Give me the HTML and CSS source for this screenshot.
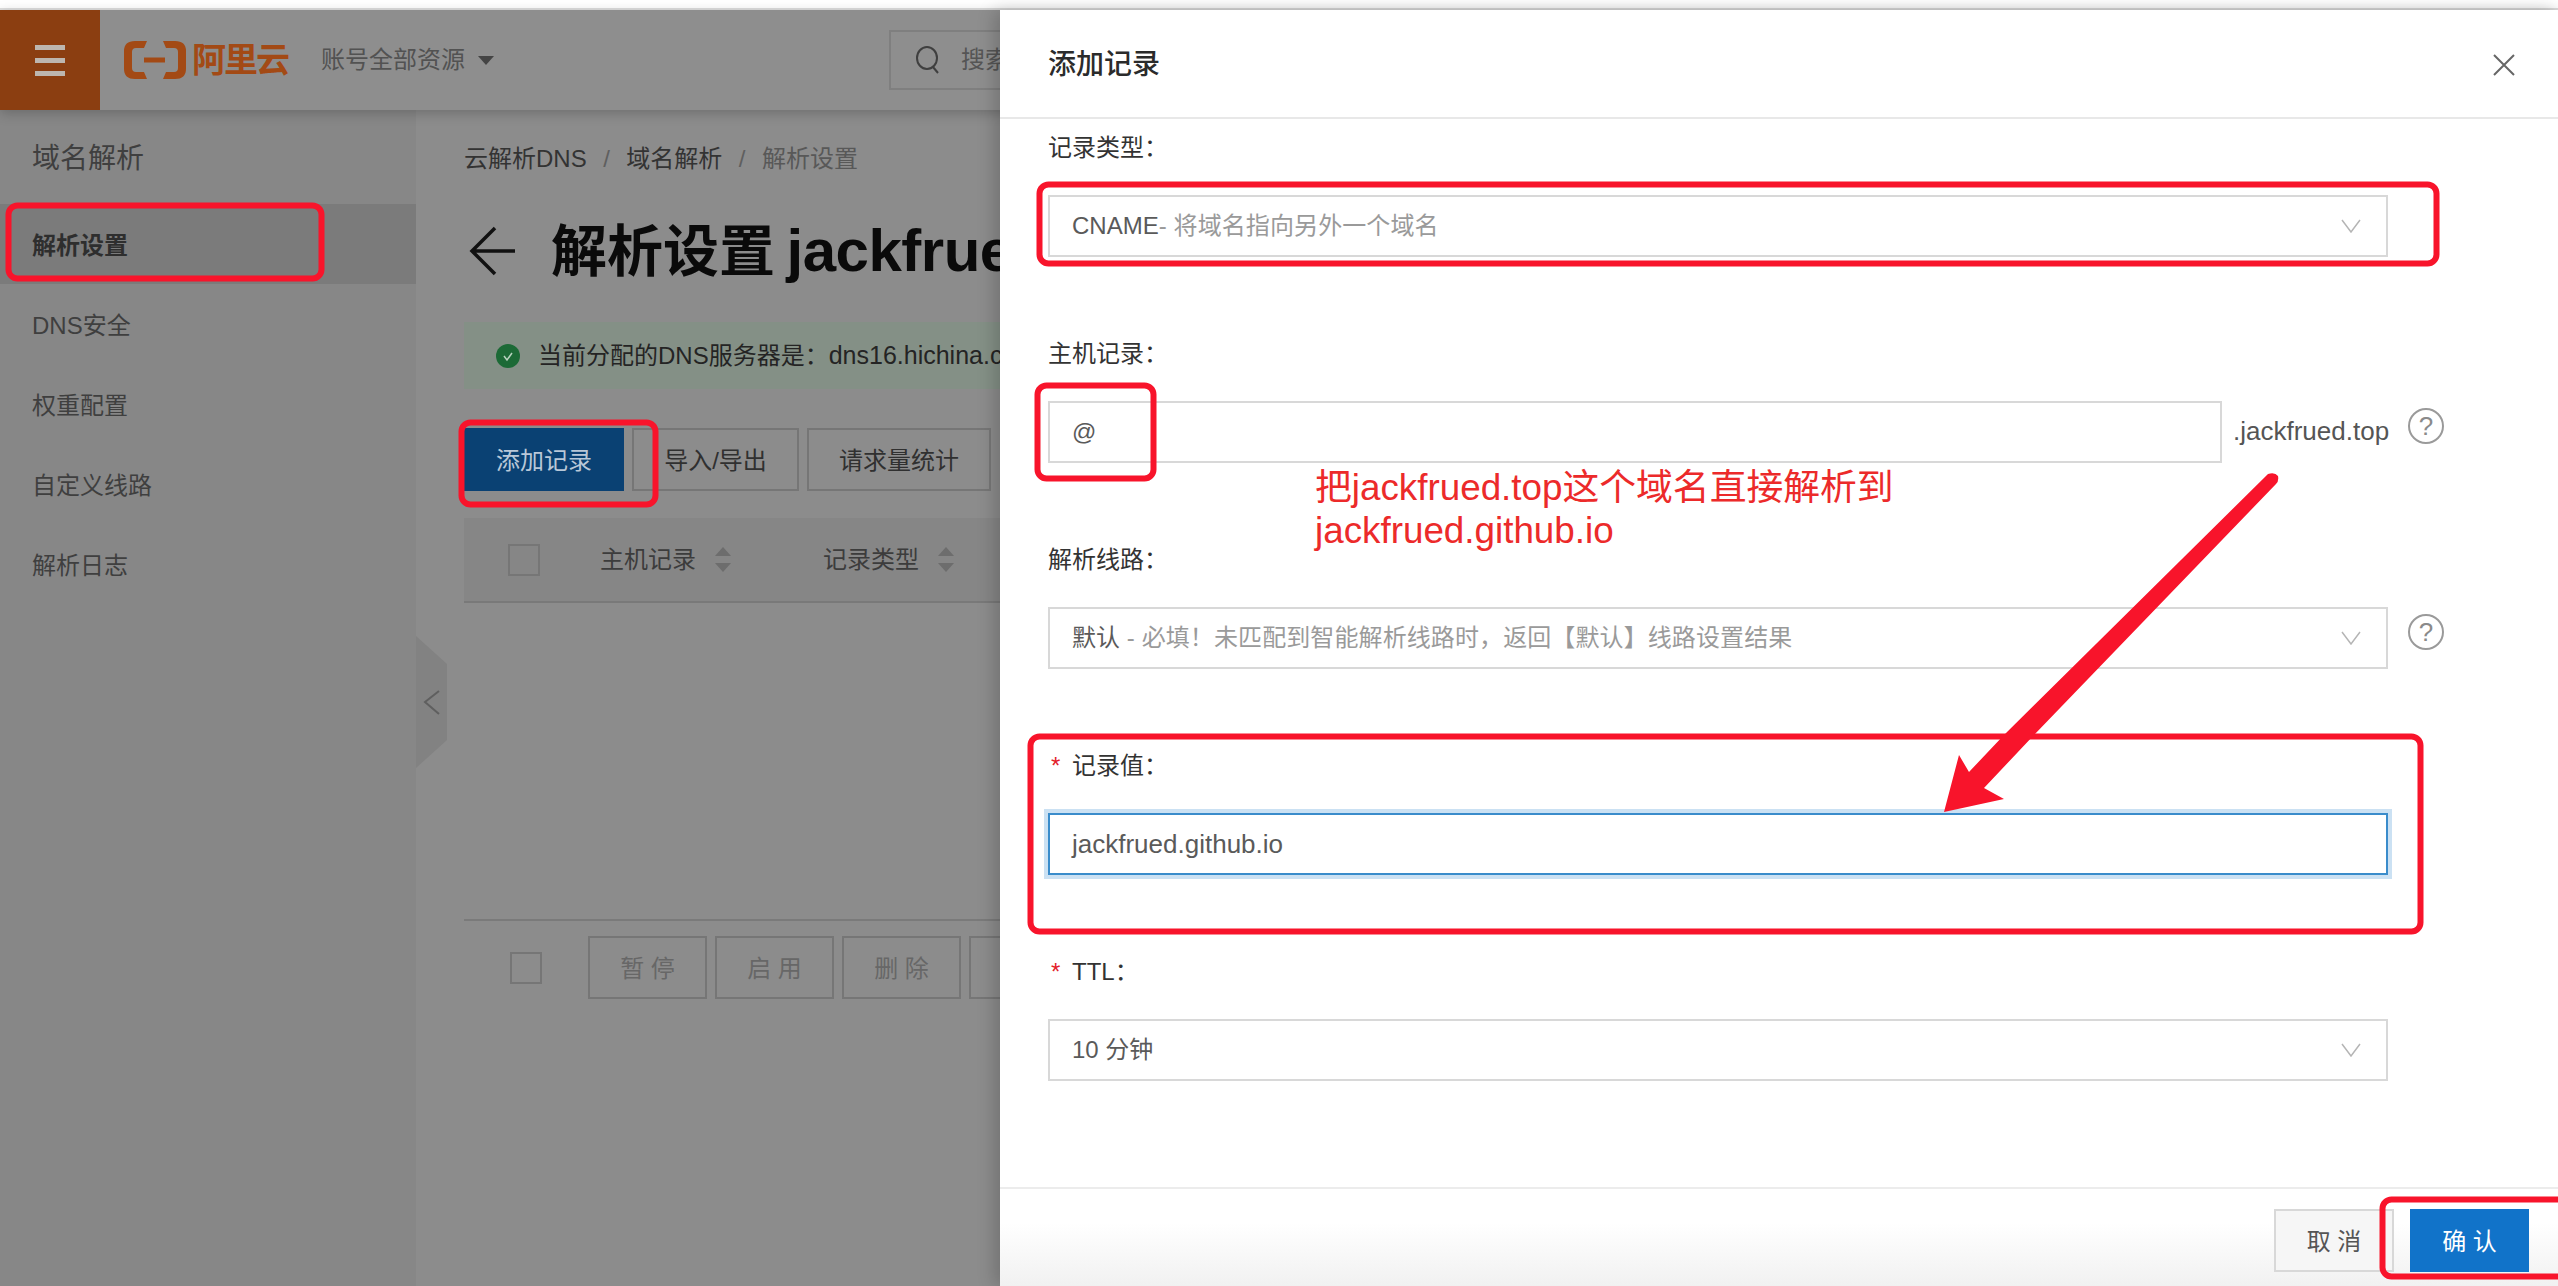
FILE: index.html
```html
<!DOCTYPE html>
<html lang="zh-CN">
<head>
<meta charset="utf-8">
<title>添加记录</title>
<link rel="stylesheet" href="styles.css">
</head>
<body>
<div class="topstrip"></div>
<header class="topbar">
  <div class="burger"><span></span><span></span><span></span></div>
  <svg class="logo-mark" width="62" height="38" viewBox="0 0 62 38"><path d="M23 0H11Q0 0 0 10V28Q0 38 11 38H23L20 31H12Q8 31 8 27V11Q8 7 12 7H20Z"/><path d="M39 0H51Q62 0 62 10V28Q62 38 51 38H39L42 31H50Q54 31 54 27V11Q54 7 50 7H42Z"/><rect x="20" y="16.500" width="21" height="5"/></svg>
  <span class="logo-text">阿里云</span>
  <span class="scope">账号全部资源</span>
  <svg class="caret" width="16" height="9" viewBox="0 0 16 9"><path d="M0 0H16L8 9Z"/></svg>
  <div class="search">
    <svg width="26" height="30" viewBox="0 0 26 30"><ellipse cx="12" cy="13" rx="10" ry="11"/><path d="M18 22L23 28"/></svg>
    <span>搜索</span>
  </div>
</header>
<div class="shell">
  <aside class="side">
    <div class="side-title">域名解析</div>
    <div class="side-item active">解析设置</div>
    <div class="side-item">DNS安全</div>
    <div class="side-item">权重配置</div>
    <div class="side-item">自定义线路</div>
    <div class="side-item">解析日志</div>
    <div class="side-tab">
      <svg width="32" height="132" viewBox="0 0 32 132"><path class="tab-shape" d="M0 0L31 28V104L0 132Z"/><path class="tab-chev" d="M23 55L9 66L23 78"/></svg>
    </div>
  </aside>
  <main class="main">
    <nav class="crumbs"><span>云解析DNS</span><i>/</i><span>域名解析</span><i>/</i><span class="crumb-last">解析设置</span></nav>
    <div class="title-row">
      <svg width="50" height="52" viewBox="0 0 50 52"><path d="M47 26H4M27 3L4 26L27 49"/></svg>
      <h1>解析设置 <span class="title-latin">jackfrued.top</span></h1>
    </div>
    <div class="alert">
      <svg width="24" height="24" viewBox="0 0 24 24"><circle cx="12" cy="12" r="12"/><path d="M8 12L11 16L16 9"/></svg>
      <span>当前分配的DNS服务器是：<span class="alert-latin">dns16.hichina.com, dns15.hichina.com</span></span>
    </div>
    <div class="toolbar">
      <button class="btn primary">添加记录</button>
      <button class="btn">导入/导出</button>
      <button class="btn">请求量统计</button>
    </div>
    <div class="thead">
      <span class="check"></span>
      <span class="th th-host">主机记录<svg width="16" height="25" viewBox="0 0 16 25"><path d="M8 0L16 9H0ZM8 25L16 16H0Z"/></svg></span>
      <span class="th th-type">记录类型<svg width="16" height="25" viewBox="0 0 16 25"><path d="M8 0L16 9H0ZM8 25L16 16H0Z"/></svg></span>
    </div>
    <div class="tbody"></div>
    <div class="batch">
      <span class="check"></span>
      <button class="btn muted">暂 停</button>
      <button class="btn muted">启 用</button>
      <button class="btn muted">删 除</button>
      <button class="btn muted">分 组</button>
    </div>
  </main>
</div>

<section class="drawer">
  <div class="drawer-head">
    <h2>添加记录</h2>
    <svg width="22" height="22" viewBox="0 0 22 22"><path d="M1 1L21 21M21 1L1 21"/></svg>
  </div>
  <div class="drawer-body">
    <div class="field">
      <label class="label">记录类型：</label>
      <div class="row">
        <div class="select"><span class="strong">CNAME</span><span class="soft">- 将域名指向另外一个域名</span><svg width="20" height="14" viewBox="0 0 20 14"><path d="M1 1L10 13L19 1"/></svg></div>
      </div>
    </div>
    <div class="field">
      <label class="label">主机记录：</label>
      <div class="row">
        <div class="input host"><span class="strong">@</span></div>
        <span class="suffix">.jackfrued.top</span>
        <span class="help">?</span>
      </div>
    </div>
    <div class="field">
      <label class="label">解析线路：</label>
      <div class="row">
        <div class="select"><span class="strong">默认</span><span class="soft"> - 必填！未匹配到智能解析线路时，返回【默认】线路设置结果</span><svg width="20" height="14" viewBox="0 0 20 14"><path d="M1 1L10 13L19 1"/></svg></div>
        <span class="help">?</span>
      </div>
    </div>
    <div class="field">
      <label class="label req"><em>*</em>记录值：</label>
      <div class="row">
        <div class="input focus"><span class="strong value-latin">jackfrued.github.io</span></div>
      </div>
    </div>
    <div class="field">
      <label class="label req"><em>*</em>TTL：</label>
      <div class="row">
        <div class="select"><span class="strong">10 分钟</span><svg width="20" height="14" viewBox="0 0 20 14"><path d="M1 1L10 13L19 1"/></svg></div>
      </div>
    </div>
  </div>
  <div class="drawer-foot">
    <button class="btn cancel">取 消</button>
    <button class="btn confirm">确 认</button>
  </div>
</section>

<svg class="marks" width="2558" height="1286" viewBox="0 0 2558 1286">
  <rect x="8.500" y="205.500" width="313" height="73" rx="9"/>
  <rect x="461.500" y="422.500" width="194" height="82" rx="9"/>
  <rect x="1039.500" y="184.500" width="1397" height="79" rx="9"/>
  <rect x="1037.500" y="385.500" width="116" height="93" rx="9"/>
  <rect x="1030.500" y="736.500" width="1390" height="195" rx="9"/>
  <rect x="2382.500" y="1199.500" width="190" height="77" rx="9"/>
  <path class="arrow" d="M2268 474Q2275 472 2278 476Q2279 481 2276 484L2034 735L1984 788L2004 799L1944 812L1959 755L1969 772L2004 735Z"/>
</svg>
<div class="note">把jackfrued.top这个域名直接解析到<br>jackfrued.github.io</div>
</body>
</html>
```
FILE: styles.css
```css
* { box-sizing: border-box; }
html, body { margin: 0; height: 100%; }
body {
  width: 2558px;
  height: 1286px;
  overflow: hidden;
  position: relative;
  display: flex;
  flex-direction: column;
  background: #8c8c8c;
  font: 24px/36px "Liberation Sans", "Noto Sans CJK SC", sans-serif;
  color: #2b2b2b;
}
button { font: inherit; margin: 0; padding: 2px 0 0; }

.topstrip { height: 10px; flex: none; background: #fff; border-bottom: 2px solid #dedede; }

.topbar {
  height: 100px;
  flex: none;
  display: flex;
  align-items: center;
  background: #8e8e8e;
  box-shadow: 0 3px 12px rgba(0, 0, 0, .22);
  position: relative;
  z-index: 1;
}
.burger {
  width: 100px;
  height: 100px;
  background: #8b3e11;
  display: flex;
  flex-direction: column;
  align-items: center;
  justify-content: center;
  gap: 8px;
}
.burger span { width: 30px; height: 5px; background: #bdb6af; }
.logo-mark { margin-left: 24px; fill: #a34a15; }
.logo-text { margin-left: 6px; font-size: 34px; letter-spacing: -2px; font-weight: 700; color: #a34a15; }
.scope { margin-left: 33px; color: #525252; }
.caret { margin-left: 13px; fill: #444; }
.search {
  margin-left: 395px;
  width: 420px;
  height: 60px;
  border: 2px solid #7f7f7f;
  display: flex;
  align-items: center;
  gap: 20px;
  padding-left: 24px;
  color: #555;
}
.search svg { fill: none; stroke: #3f3f3f; stroke-width: 2; }

.shell { flex: 1; display: flex; min-height: 0; }
.side { width: 416px; flex: none; background: #878787; position: relative; color: #3f3f3f; }
.side-title { font-size: 28px; line-height: 40px; padding: 29px 32px 25px; }
.side-item { height: 80px; line-height: 83px; padding-left: 32px; }
.side-item.active { background: #7b7b7b; font-weight: 700; color: #2e2e2e; }
.side-tab { position: absolute; left: 416px; top: 526px; width: 32px; height: 132px; line-height: 0; }
.tab-shape { fill: #828282; }
.tab-chev { fill: none; stroke: #5f5f5f; stroke-width: 2; }

.main { flex: 1; min-width: 0; padding: 31px 0 0 48px; overflow: hidden; }
.crumbs { display: flex; align-items: center; color: #333; white-space: nowrap; }
.crumbs i { font-style: normal; margin: 0 16.500px; color: #5f5f5f; }
.crumb-last { color: #585858; }
.title-row { margin-top: 42px; height: 64px; display: flex; align-items: center; gap: 33px; padding-left: 4px; }
.title-row svg { flex: none; fill: none; stroke: #111; stroke-width: 3.500; }
.title-row h1 { margin: 0; font-size: 56px; line-height: 64px; font-weight: 700; color: #0a0a0a; white-space: nowrap; }
.title-latin { margin-left: -4px; font-size: 60px; letter-spacing: -.5px; }
.alert {
  margin-top: 39px;
  height: 67px;
  background: #849086;
  display: flex;
  align-items: center;
  gap: 18px;
  padding-left: 32px;
  white-space: nowrap;
  color: #242424;
}
.alert svg { flex: none; }
.alert circle { fill: #1c6a36; }
.alert path { fill: none; stroke: #b8d2bf; stroke-width: 1.500; }
.alert-latin { font-size: 25px; }
.toolbar { margin-top: 39px; display: flex; gap: 8px; }
.btn {
  height: 63px;
  background: transparent;
  border: 2px solid #767676;
  color: #303030;
  white-space: nowrap;
}
.toolbar .btn { width: 167px; }
.toolbar .btn + .btn + .btn { width: 184px; }
.toolbar .primary { width: 160px; background: #0a4173; border-color: #0a4173; color: #b9c8d8; }
.thead {
  margin-top: 27px;
  height: 85px;
  background: #868686;
  border-bottom: 2px solid #797979;
  display: flex;
  align-items: center;
  padding-left: 44px;
  color: #3c3c3c;
}
.check { width: 32px; height: 32px; flex: none; border: 2px solid #767676; }
.th { display: flex; align-items: center; gap: 19px; }
.th-host { margin-left: 60px; }
.th-type { margin-left: 92px; }
.th svg { fill: #6d6d6d; }
.tbody { height: 318px; border-bottom: 2px solid #7a7a7a; }
.batch { margin-top: 15px; display: flex; align-items: center; padding-left: 46px; gap: 8px; }
.batch .check { margin-right: 38px; }
.batch .muted { width: 119px; padding-top: 3px; color: #676767; }

.drawer {
  position: absolute;
  left: 1000px;
  top: 10px;
  right: 0;
  bottom: 0;
  z-index: 2;
  background: #fff;
  box-shadow: -6px 0 16px rgba(0, 0, 0, .18);
  display: flex;
  flex-direction: column;
}
.drawer-head {
  height: 109px;
  flex: none;
  border-bottom: 2px solid #e8e8e8;
  display: flex;
  align-items: center;
  justify-content: space-between;
  padding: 2px 43px 0 48px;
}
.drawer-head h2 { margin: 0; font-size: 28px; line-height: 40px; font-weight: 500; color: #2b2b2b; }
.drawer-head svg { fill: none; stroke: #666; stroke-width: 2; }
.drawer-body { flex: 1; padding: 10px 0 0 48px; }
.field { height: 206px; }
.label { display: block; height: 36px; padding-top: 1px; color: #333; }
.label em { display: inline-block; width: 24px; padding-left: 3px; font-style: normal; color: #e3202a; }
.row { margin-top: 30px; display: flex; align-items: flex-start; }
.select, .input {
  height: 62px;
  border: 2px solid #d8d8d8;
  display: flex;
  align-items: center;
  padding: 0 22px;
  background: #fff;
  white-space: pre;
}
.select { width: 1340px; }
.select svg { margin-left: auto; fill: none; stroke: #b5b5b5; stroke-width: 1.500; flex: none; margin-right: 3px; }
.strong { color: #5a5a5a; }
.soft { color: #9a9a9a; letter-spacing: .1px; }
.value-latin { font-size: 26px; }
.input.host { width: 1174px; }
.input.focus { width: 1340px; border-color: #3a8ccb; box-shadow: 0 0 0 4px #cbe1f3; }
.suffix { margin: 12px 0 0 11px; width: 155px; font-size: 26px; color: #555; white-space: nowrap; }
.help {
  width: 36px;
  height: 36px;
  margin: 7px 0 0 20px;
  border: 2px solid #9a9a9a;
  border-radius: 50%;
  text-align: center;
  line-height: 32px;
  font-size: 26px;
  color: #8a8a8a;
}
.drawer-foot {
  height: 99px;
  flex: none;
  border-top: 2px solid #ececec;
  background: linear-gradient(#fff 35%, #f1f1f1);
  display: flex;
  justify-content: flex-end;
  gap: 16px;
  padding: 20px 29px 0 0;
}
.cancel { width: 120px; background: #f6f6f6; border-color: #d8d8d8; color: #555; }
.confirm { width: 119px; background: #1173c9; border-color: #1173c9; color: #fff; }

.marks { position: absolute; left: 0; top: 0; z-index: 3; pointer-events: none; }
.marks rect { fill: none; stroke: #f8142b; stroke-width: 6; }
.marks .arrow { fill: #f8142b; }
.note {
  position: absolute;
  left: 1315px;
  top: 466px;
  z-index: 3;
  font-size: 36.800px;
  line-height: 43px;
  color: #ec2a2a;
  white-space: nowrap;
}
```
